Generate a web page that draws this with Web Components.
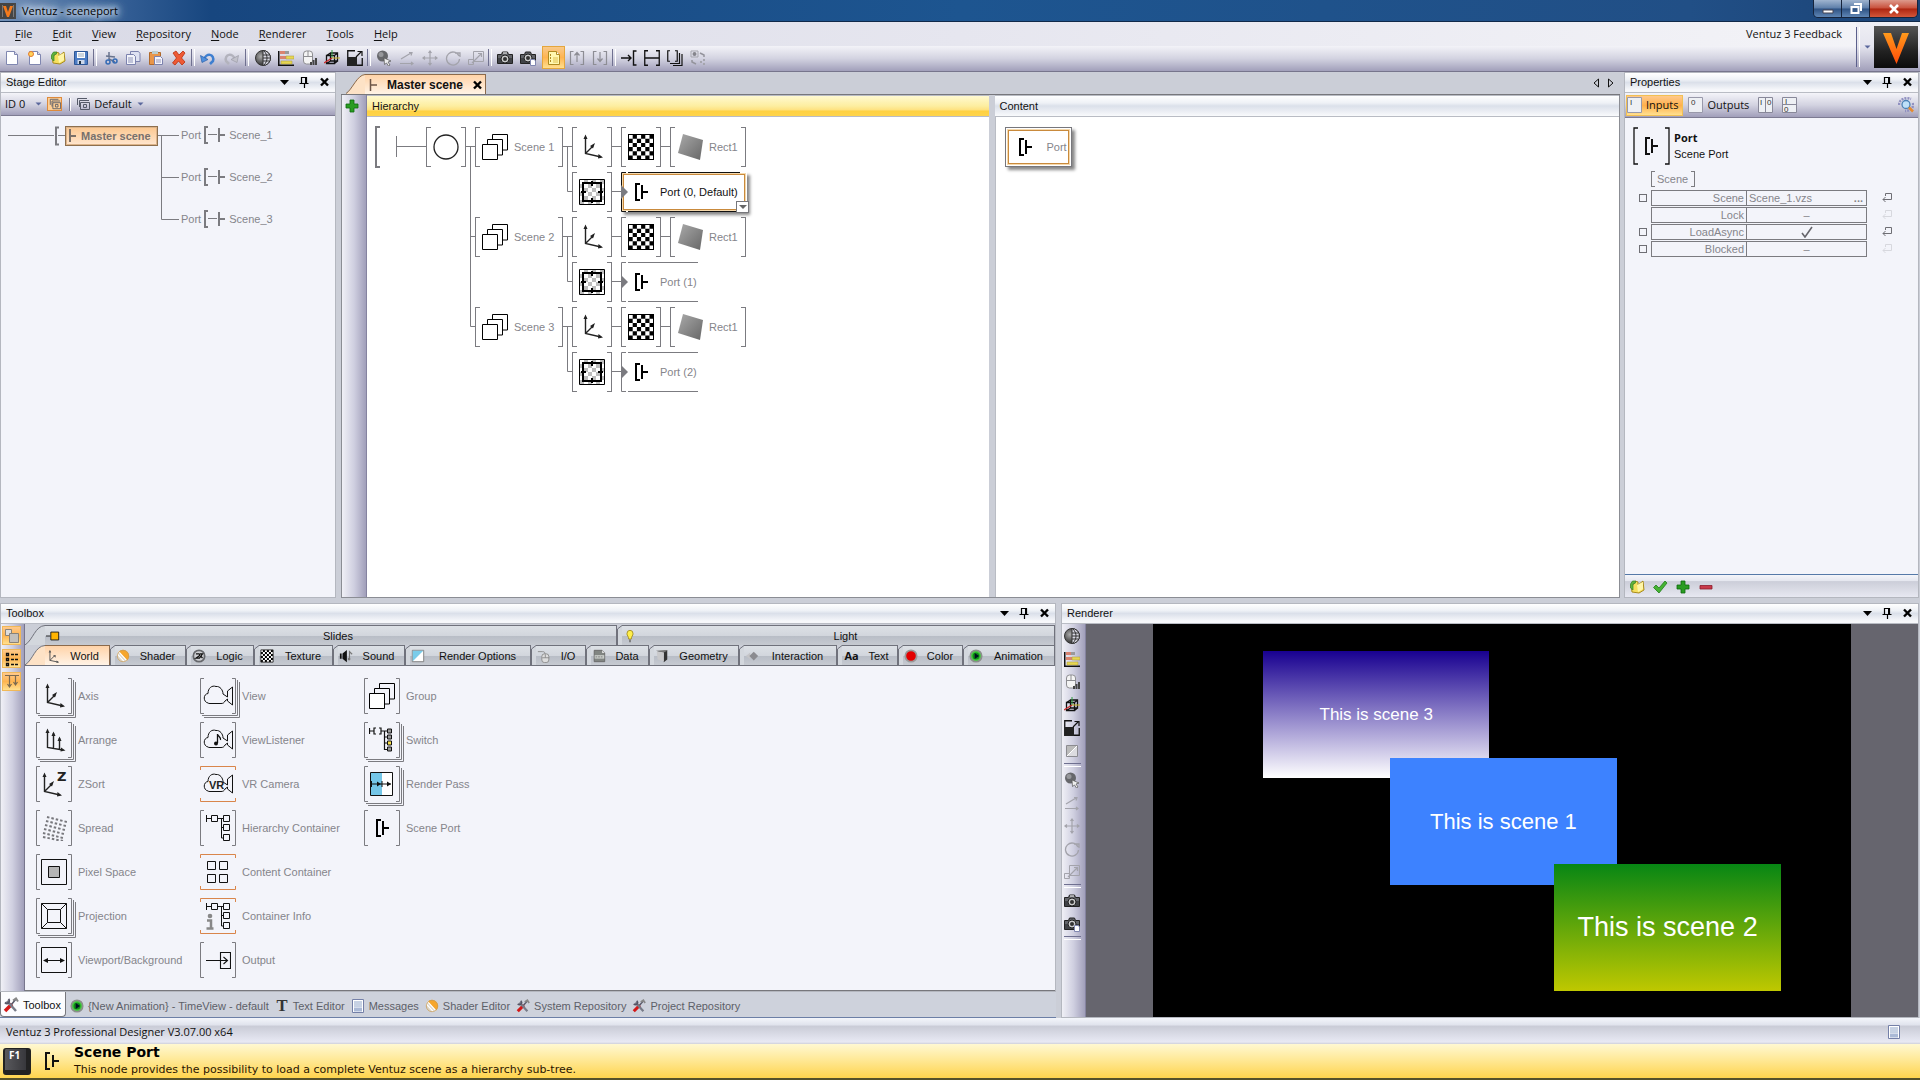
<!DOCTYPE html>
<html lang="en">
<head>
<meta charset="utf-8">
<title>Ventuz - sceneport</title>
<style>
html,body{margin:0;height:100%}
body{--ui:"Liberation Sans",Arial,sans-serif;--menu:"Open Sans","Noto Sans",sans-serif;--line:#7b7b80;--dim:#85858b;font:11px/14px var(--ui);color:#111;background:#c9cdd7;overflow:hidden}
</style>
</head>
<body>
<ventuz-app></ventuz-app>
<script>
const BASE = `:host,*{box-sizing:border-box}button{font:inherit;color:inherit;background:none;border:0;padding:0;margin:0;display:flex;align-items:center;justify-content:center}svg{display:block}`;
function define(name, css, html) {
  const t = document.createElement('template');
  t.innerHTML = `<style>${BASE}${css}</style>`;
  customElements.define(name, class extends HTMLElement {
    connectedCallback() {
      if (this.shadowRoot) return;
      const root = this.attachShadow({ mode: 'open' });
      root.append(t.content.cloneNode(true));
      const body = document.createElement('template');
      body.innerHTML = typeof html === 'function' ? html(this) : html;
      root.append(body.content.cloneNode(true));
    }
  });
}

/* ---------- icons: [viewBox size, markup] ---------- */
const checker = (n, s, o) => { let d = ''; for (let y = 0; y < n; y++) for (let x = 0; x < n; x++) if ((x + y) % 2) d += `M${o + x * s} ${o + y * s}h${s}v${s}h${-s}z`; return d; };
const page = '<path d="M2.500 1.500h8l3 3v10h-11z" fill="#fff" stroke="#8087b0"/><path d="M10.500 1.500v3h3" fill="#dde" stroke="#8087b0"/>';
const cloud = '<path d="M5 22C0 21 0 13 5 12.500C5 7 9 4 13 5.500C17 5 20 9 20 13L24.500 16V10L29.500 6V24L24.500 20V18L22 20C21 22 20 22.500 18 22.500H7C6 22.500 5.500 22.500 5 22Z" fill="none" stroke="#111"/>';
const treeBoxes = '<path d="M1.500 4v7M1.500 7.500h5M12.500 7.500h6M16.500 7.500v19.500h2M16.500 16.500h2" fill="none" stroke="#111"/><path d="M6.500 4.500h6v6h-6zM18.500 4.500h6v6h-6zM18.500 13.500h6v6h-6zM18.500 23.500h6v6h-6z" fill="none" stroke="#111"/>';
const tools = '<path d="M2 14L9 7" stroke="#d41818" stroke-width="3.500"/><path d="M8 8l5-6" stroke="#556" stroke-width="1.500"/><path d="M4 4l9 10" stroke="#777b88" stroke-width="2.500"/><path d="M2 5.500a3 3 0 0 0 4 0M5.500 2a3 3 0 0 1 .5 3.500" stroke="#556" stroke-width="2" fill="none"/><path d="M10 3.500l3-2 2 3" stroke="#888" stroke-width="2" fill="none"/>';
const ICONS = {
  ventuz: [16, '<rect width="16" height="16" fill="#444"/><path d="M2.500 2v12M13.500 2v12" stroke="#777"/><path d="M3 3h3l2 6 2-6h3L9 14H7z" fill="#f47a1c"/>'],
  newfile: [16, page],
  newstar: [16, page + '<circle cx="4" cy="4" r="2.500" fill="#ffd35a" stroke="#e77c2c"/>'],
  open: [16, '<path d="M2 6l3-1 1-3 3 1v3l5-4 1 9-5 3-7-1z" fill="#f6e05f" stroke="#a98b1d"/><path d="M1.500 9V5l2-3h3v2L4 5v6z" fill="#62b33b" stroke="#35842a" stroke-width=".7"/><path d="M8 6l6-3v7l-5 3z" fill="#fff6a8"/>'],
  save: [16, '<path d="M1.500 1.500h13v13h-13z" fill="#4c7cc4" stroke="#2d5797"/><path d="M4 2h8v6H4z" fill="#fff"/><path d="M4.500 10h7v4h-7z" fill="#cdd8ea"/><path d="M5 4h6M5 6h6" stroke="#9ab"/><path d="M6 11h2v3H6z" fill="#234"/>'],
  cut: [16, '<path d="M7 2v7l6 3M4 6l9 1" stroke="#68738d" stroke-width="1.500" fill="none"/><circle cx="6" cy="12" r="2" fill="none" stroke="#356bb5" stroke-width="1.500"/><circle cx="13" cy="11" r="2" fill="none" stroke="#356bb5" stroke-width="1.500"/>'],
  copy: [16, '<path d="M5.500 1.500h8l1.500 2v8h-9.500z" fill="#dfe2f2" stroke="#7c82ae"/><path d="M1.500 4.500h7l2 2v8h-9z" fill="#f2f3fa" stroke="#7c82ae"/><path d="M3 8h5M3 10h5M3 12h5" stroke="#8d93b8"/>'],
  paste: [16, '<path d="M1.500 2.500h11v12h-11z" fill="#e8964a" stroke="#b0692a"/><path d="M4 1h6v3H4z" fill="#bcc"/><path d="M6.500 6.500h6l2 2v6h-8z" fill="#f4f4fb" stroke="#7c82ae"/><path d="M8 10h5M8 12h5" stroke="#99b"/>'],
  del: [16, '<path d="M2 3l3-2 3 4 4-4 2 2-3.500 5 3.500 4-3 3-3.500-4-3.500 4-2.500-2 4-5z" fill="#ee5a35" stroke="#b9300f" stroke-width=".8"/>'],
  undo: [16, '<path d="M4 10c2-8 11-6 9 1l-3 3" fill="none" stroke="#3f7fd0" stroke-width="2.500"/><path d="M0.500 5.500l1.500 7 6-3z" fill="#4f90de" stroke="#2b5ea8" stroke-width=".7"/>'],
  redo: [16, '<path d="M12 10C10 2 1 4 3 11l3 3" fill="none" stroke="#b3b3bd" stroke-width="2.500"/><path d="M15.500 5.500l-1.500 7-6-3z" fill="#c2c2cb" stroke="#9b9ba6" stroke-width=".7"/>'],
  globe: [16, '<defs><radialGradient id="g" cx=".35" cy=".4"><stop offset="0" stop-color="#aaa"/><stop offset="1" stop-color="#444"/></radialGradient></defs><circle cx="8" cy="8" r="7.500" fill="url(#g)" stroke="#333"/><path d="M8 .5a7.500 7.500 0 0 1 0 15z" fill="#d8d8e2" stroke="#333"/><path d="M8 5h6.500M8 8h7.500M8 11h6.500M9 1c4 4 4 10 0 14" fill="none" stroke="#333"/>'],
  bars: [16, '<path d="M.75 1v14.250H16" fill="none" stroke="#111" stroke-width="1.500"/><path d="M2 1h5v3H2zM2 6h6v3H2z" fill="#d98370"/><path d="M7 1h4v3H7z" fill="#999"/><path d="M8 6h8v3H8zM3 11h11v3H3z" fill="#e6d653" stroke="#a89a3a" stroke-width=".5"/>'],
  mouse: [16, '<rect x="2.500" y="1" width="9" height="13" rx="3" fill="#f4f4f4" stroke="#8e8e92"/><path d="M7 1v5M2.500 6.500h9" stroke="#8e8e92"/><path d="M9 12h2v3H9zM11.500 10h2v5h-2zM14 8h2v7h-2z" fill="#444"/>'],
  cube: [16, '<path d="M2.500 5.500h8v8h-8zM6.500 3h7v8h-7zM2.500 5.500l4-2.500M10.500 5.500l3-2.500M10.500 13.500l3-2.500M2.500 13.500l4-2.500" fill="none" stroke="#111" stroke-width="1.300"/><path d="M8 0v8" stroke="#2a9a3a"/><path d="M8 8h8" stroke="#cbb62a"/><path d="M8 8l-8 5" stroke="#cc2a2a" stroke-width="1.300"/>'],
  scale: [16, '<path d="M.75 6V.75H8M15.250 8v7.250H10M.75 6v9.250h9" fill="none" stroke="#111" stroke-width="1.300"/><path d="M1 7h9v9H1z" fill="#222"/><path d="M9 7l5-5M10.500 1.500H15V6" fill="none" stroke="#111" stroke-width="1.200"/>'],
  half: [16, '<path d="M2.500 2.500h11v11h-11z" fill="#dcdce0" stroke="#8b8b90"/><path d="M3 3h10L3 13z" fill="#bbb"/><path d="M3 13L13 3" stroke="#fff"/>'],
  pick: [16, '<circle cx="6.500" cy="6" r="5.500" fill="#66676b"/><circle cx="5" cy="4.500" r="2.500" fill="#96979b"/><path d="M8 8l7 3-3 1 2 3-1.500 1-2-3-2 1.500z" fill="#eee" stroke="#555" stroke-width=".7"/>'],
  axes: [16, '<path d="M2 9l10-6M1 13.500h13M10 2.500h3l-1 3M12 12l2 1.500-2 1.500" fill="none" stroke="#a3a3ab" stroke-width="1.200"/>'],
  move: [16, '<path d="M8 1v14M1 8h14M6.500 3L8 1l1.500 2M6.500 13L8 15l1.500-2M3 6.500L1 8l2 1.500M13 6.500L15 8l-2 1.500" fill="none" stroke="#a3a3ab" stroke-width="1.200"/>'],
  rotate: [16, '<path d="M14 6A6.500 6.500 0 1 0 14.500 9M10 3h5v4" fill="none" stroke="#a3a3ab" stroke-width="1.300"/>'],
  resize: [16, '<path d="M5.500 1.500h10v10h-10zM.5 9.500h5v5h-5z" fill="none" stroke="#a3a3ab"/><path d="M4 13l9-9M10 3.500h3.500V7" fill="none" stroke="#a3a3ab" stroke-width="1.200"/>'],
  camera: [16, '<path d="M.5 4.500h4l1-2.500h5l1 2.500h4v9H.5z" fill="#63656a" stroke="#222"/><path d="M1 8h14v5H1z" fill="#404246"/><circle cx="8" cy="9" r="4" fill="#c9cacb" stroke="#222"/><circle cx="8" cy="9" r="2" fill="#333"/><path d="M6 3h4" stroke="#fff"/>'],
  camera2: [16, '<path d="M.5 4.500h4l1-2.500h5l1 2.500h4v9H.5z" fill="#63656a" stroke="#222"/><path d="M1 8h14v5H1z" fill="#404246"/><circle cx="8" cy="8" r="4" fill="#c9cacb" stroke="#222"/><circle cx="8" cy="8" r="2" fill="#333"/><path d="M10.500 9.500h4l1 1.500v4.500h-5z" fill="#fff" stroke="#8087b0"/>'],
  note: [16, '<path d="M2.500 1.500h8l3 3v10h-11z" fill="#fff7b0" stroke="#b08a20"/><path d="M10.500 1.500v3h3" fill="#fff" stroke="#b08a20"/><path d="M4 5h1M4 8h1M4 11h1" stroke="#b08a20" stroke-width="2"/><path d="M7 8h5M7 10h5M7 12h5" stroke="#e0c050"/>'],
  bup: [16, '<path d="M4.500 1.500h-3v13h3M11.500 1.500h3v13h-3M8 3v9M5.500 5.500L8 2.500l2.500 3" fill="none" stroke="#8d8d94" stroke-width="1.200"/>'],
  bdown: [16, '<path d="M4.500 1.500h-3v13h3M11.500 1.500h3v13h-3M8 2v9M5.500 8.500L8 11.500l2.500-3" fill="none" stroke="#8d8d94" stroke-width="1.200"/>'],
  inb: [16, '<path d="M15.500 1h-3v14h3M0 8h10M7 5l3 3-3 3" fill="none" stroke="#111" stroke-width="1.400"/>'],
  midb: [16, '<path d="M4 .75H.75v14.500H4M12 .75h3.250v14.500H12M1 8h14" fill="none" stroke="#111" stroke-width="1.300"/>'],
  stackb: [16, '<path d="M3 .75H.75v10.500H3M8 .75h2.250v10.500H8" fill="none" stroke="#111" stroke-width="1.200"/><path d="M3 13.500h9.500V3M6 15.500h9V4" fill="none" stroke="#111" stroke-width="1.200"/>'],
  swap: [16, '<path d="M1 1h7v6H1z" fill="none" stroke="#a5a5ad"/><circle cx="4.500" cy="4" r="2" fill="#85858c"/><path d="M10 3l4 2v2M6 14l-4-2v-2" fill="none" stroke="#94949c" stroke-width="1.500"/><path d="M10 11h2v2h-2zM13 9h2v2h-2zM13 13h2v2h-2z" fill="#a5a5ad"/>'],
  find: [16, '<path d="M1 8c0-6 7-8 12-6M15 6c1 5-3 8-8 8" fill="none" stroke="#9090c0" stroke-width="2.500" stroke-dasharray="2 1"/><circle cx="8" cy="7.500" r="4" fill="#bfe0f8" stroke="#4d82b5" stroke-width="1.300"/><path d="M11 10.500l4 4" stroke="#e58a2e" stroke-width="2.500"/>'],
  ok: [16, '<path d="M1.500 8.500L4 6l3 3 6-7 2 2-8 10z" fill="#46b333" stroke="#1f7d19" stroke-width=".8"/>'],
  plus: [16, '<path d="M6 2h4v4h4v4h-4v4H6v-4H2V6h4z" fill="#2a9c22" stroke="#0c6a0c" stroke-width=".8"/>'],
  minus: [16, '<path d="M2 6.500h12v3.500H2z" fill="#c8394a" stroke="#8c1c2c" stroke-width=".8"/>'],
  caret: [16, '<path d="M4 6h9l-4.500 5z" fill="#000"/>'],
  pin: [16, '<path d="M5.500 3.500h5v6h-5zM3.500 9.500h9M8.500 10v4" fill="none" stroke="#000" stroke-width="1.200"/><path d="M9 3h2v7H9z" fill="#000"/>'],
  close: [16, '<path d="M5 4.500l7 7M12 4.500l-7 7" stroke="#000" stroke-width="2.400"/>'],
  minicaret: [8, '<path d="M1.500 2.500h6l-3 3z" fill="#5a679c"/>'],
  stages: [14, '<path d="M1.500 8V1.500H11M3.500 10V3.500H13M4.500 5.500h9v7h-9z" fill="none" stroke="#555a68"/><path d="M7.500 7.500h3v3h-3z" fill="none" stroke="#555a68"/>'],
  msg: [14, '<path d="M1.500 .5h11v13h-11z" fill="#fff" stroke="#7480a8"/><path d="M3 3h8M3 5h8M3 7h8" stroke="#8ea4c8"/><path d="M3 8.500h8v4H3z" fill="#aab9d6"/>'],
  tools: [16, tools],
  anim: [16, '<circle cx="8" cy="8" r="6.500" fill="#3fd03a" stroke="#8b8f8b" stroke-width="2"/><circle cx="8" cy="8" r="4" fill="#118a18"/><path d="M6.500 4.500v7L11.500 8z" fill="#012"/>'],
  tee: [16, '<text x="8" y="14" text-anchor="middle" font-family="Liberation Serif,serif" font-weight="bold" font-size="19" fill="#333">T</text>'],
  shader: [16, '<circle cx="8" cy="8" r="7" fill="#dcd5c6"/><path d="M3 3a7 7 0 0 1 10 10z" fill="#f6a62c"/><path d="M1.500 5.500l8 9M3 3l9 10" stroke="#fff" stroke-width="1.500"/><circle cx="8" cy="8" r="6.500" fill="none" stroke="#c59a58" stroke-width=".8"/>'],
  logic: [16, '<circle cx="8" cy="8" r="6.500" fill="#cfd0d4" stroke="#66686c" stroke-width="2"/><path d="M4.500 5.500h3.500c1 0 1 2 0 2.500l-3.500 2.500h4l3.500-5h-3M10 8l2 2.500" fill="none" stroke="#111" stroke-width="1.400"/>'],
  check16: [16, '<path d="M1 1h14v14H1z" fill="#fff"/><path d="' + checker(6, 2.3, 1) + '" fill="#000"/><path d="M1 1h14v14H1z" fill="none" stroke="#222"/>'],
  sound: [16, '<path d="M1 5h2v6H1zM4 5l5-4v14l-5-4z" fill="#111"/><path d="M12 12V3l3 3" fill="none" stroke="#777" stroke-width="1.300"/><circle cx="11.500" cy="11.500" r="1.500" fill="#777"/>'],
  ropt: [16, '<path d="M1.500 1.500h13v13h-13z" fill="#fff" stroke="#777"/><path d="M2 2h12L2 14z" fill="#7accea"/>'],
  io: [16, '<path d="M1 3h5c3 0 3 1 3 3" fill="none" stroke="#888"/><rect x="5.500" y="5.500" width="8" height="10" rx="3" fill="#ddd" stroke="#888"/><path d="M9.500 6v4M6 10h8" stroke="#888"/>'],
  data: [16, '<path d="M2.500 1.500h9l3 3v10h-12z" fill="#818582" stroke="#666"/><path d="M11.500 1.500v3h3" fill="#ddd"/><path d="M3 7h11v4H3z" fill="#c8ccc8"/><path d="M4 9h9" stroke="#777" stroke-dasharray="2 1"/>'],
  geo: [16, '<path d="M2 3l10-1 2-1v11l-4 3V4z" fill="#333"/><path d="M2 3h8v11L3 12z" fill="#c9c9cb"/><path d="M1 2l11-1 2 1-4 2z" fill="#777"/>'],
  inter: [16, '<path d="M1 8l5-4v8z" fill="#c5c5c8"/><path d="M5 8l5-5 5 5-5 5z" fill="#8b8b90"/>'],
  red: [16, '<circle cx="8" cy="8" r="6.500" fill="#e30000" stroke="#9a9a9a" stroke-width="2"/>'],
  slide: [16, '<path d="M0 8h5" stroke="#111"/><path d="M5.500 3.500h9v9h-9z" fill="#ffb400" stroke="#111"/>'],
  bulb: [16, '<path d="M4.500 5.500a3.500 4 0 0 1 7 0c0 2-2 3-2 6h-3c0-3-2-4-2-6z" fill="#ffef4a" stroke="#a08a20"/><path d="M7 12h2v3H7z" fill="#777"/>'],
  world: [16, '<path d="M4.500 2v11L14 15M4.500 13l6-6" fill="none" stroke="#555" stroke-width="1.100"/><path d="M3 4l1.500-3L6 4zM8 7h3v3zM12 13l3 2-3 1z" fill="#555"/>'],
  tb1: [16, '<path d="M1.500 1.500h6v6h-6z" fill="#ddd" stroke="#8a8378"/><path d="M5.500 5.500h9v9h-9z" fill="#c3c0bc" stroke="#8a8378"/>'],
  tb2: [16, '<path d="M2.500 2.500h2v2h-2zM2.500 7.500h2v2h-2zM2.500 12.500h2v2h-2z" fill="none" stroke="#111" stroke-width="1.300"/><path d="M7 3.500h8M7 8.500h8M7 13.500h8" stroke="#111" stroke-width="1.500" stroke-dasharray="3 1"/>'],
  tb3: [16, '<path d="M1 1.500h14M5.500 2v11M11.500 2v8M3.500 10l2 3 2-3M9.500 8l2 3 2-3" fill="none" stroke="#7b6a50" stroke-width="1.200"/>'],
  circle: [26, '<circle cx="13" cy="13" r="12" fill="none" stroke="#222" stroke-width="1.300"/>'],
  group: [26, '<path d="M10.500 5V.5h15v15.500H21" fill="none" stroke="#000"/><path d="M5.500 10V5.500h15v15.500H16" fill="none" stroke="#000"/><path d="M.5 10.500h15v15h-15z" fill="#fff" stroke="#000"/>'],
  axis: [26, '<path d="M6.500 3v16.500L22 23M6.500 19.500L14 12" fill="none" stroke="#222" stroke-width="1.400"/><path d="M4.500 5l2-4.500L8.500 5zM11 12l5-3-2 5.500zM19.500 20l4.500 3.500-5 1z" fill="#222"/>'],
  arrange: [26, '<path d="M6.500 5v15.500L22 23M12.500 6v15M18.500 11v11" fill="none" stroke="#222" stroke-width="1.400"/><path d="M4.500 6l2-4.500L8.500 6zM10.500 9l2-4.500 2 4.500zM16.500 14l2-4.500 2 4.500zM20 20.500l4.500 3-5 1z" fill="#222"/>'],
  zsort: [26, '<path d="M3.500 5v15.500L19 24M3.500 20.500L11 13" fill="none" stroke="#222" stroke-width="1.400"/><path d="M1.500 6l2-4.500L5.500 6zM8 13l5-3-2 5.500zM16.500 21l4.500 3.500-5 1z" fill="#222"/><text x="16" y="10" font-family="DejaVu Sans,sans-serif" font-weight="bold" font-size="13" fill="#222">Z</text>'],
  spread: [26, '<path d="M6 2l20 5M5 6l20 5M4 10l20 5M3 14l20 5M2 18l20 5M2 22l20 4" fill="none" stroke="#77777c" stroke-width="2" stroke-dasharray="2.500 2"/>'],
  pixel: [26, '<path d="M.5 .5h25v25H.5z" fill="none" stroke="#111"/><path d="M7.500 7.500h11v11h-11z" fill="#b5b5b5" stroke="#111"/>'],
  projection: [26, '<path d="M.5 .5h25v25H.5zM6.500 6.500h13v13h-13zM.5 .5l6 6M25.500 .5l-6 6M.5 25.500l6-6M25.500 25.500l-6-6" fill="none" stroke="#111"/>'],
  viewport: [26, '<path d="M.5 .5h25v25H.5zM4 13.500h18" fill="none" stroke="#111"/><path d="M2 13.500l5-2.500v5zM24 13.500L19 11v5z" fill="#111"/>'],
  view: [30, cloud],
  listener: [30, cloud + '<path d="M14.500 18V9c0 2 4 3 3 6" fill="none" stroke="#111" stroke-width="1.300"/><circle cx="13" cy="18.500" r="2" fill="#111"/>'],
  vr: [30, cloud + '<text x="6" y="20" font-family="Liberation Sans,sans-serif" font-weight="bold" font-size="11" fill="#222">VR</text>'],
  hcont: [30, '<g transform="translate(2 -2)">' + treeBoxes + '</g>'],
  cinfo: [30, '<g transform="translate(2 -2)">' + treeBoxes + '</g><circle cx="7" cy="15" r="2.300" fill="#888"/><path d="M4 19.500h4v8M3.500 27.500h7" stroke="#888" stroke-width="2.500" fill="none"/>'],
  ccont: [26, '<path d="M2.500 2.500h8v8h-8zM14.500 2.500h8v8h-8zM2.500 15.500h8v8h-8zM14.500 15.500h8v8h-8z" fill="none" stroke="#111"/>'],
  output: [26, '<path d="M15.500 5.500h10v16h-10zM1 13.500h21M18.500 10l4 3.500-4 3.500" fill="none" stroke="#111" stroke-width="1.100"/>'],
  switch: [26, '<path d="M.5 1v6M.5 4h4M7 1H5v6h2M10 1h2v6h-2M12 4h6M15.500 4v18.500h3M15.500 10h3M15.500 16h3" fill="none" stroke="#111" stroke-width="1.200"/><path d="M18.500 2h4v4h-4zM18.500 8h4v4h-4zM18.500 20h4v4h-4z" fill="#999" stroke="#111"/><path d="M18.500 14h4v4h-4z" fill="#f7e04a" stroke="#111"/>'],
  rpass: [26, '<path d="M1.500 1.500h22v23h-22z" fill="#fff" stroke="#111"/><path d="M2 2h11v22H2z" fill="#74c6e8"/><path d="M2 13h20M2.500 10v6M13 10v6" stroke="#111"/><path d="M8 10.500l4 2.500-4 2.500zM18 10.500l4 2.500-4 2.500z" fill="#111"/>'],
  port: [26, '<path d="M12 5H8v16h4" fill="none" stroke="#000" stroke-width="2"/><path d="M14 6v14M14 13h6" fill="none" stroke="#000" stroke-width="2"/>'],
  checker: [26, '<path d="M0 0h26v26H0z" fill="#fff" stroke="#000" stroke-width="2"/><path d="' + checker(6, 4.2, .5) + '" fill="#000"/>'],
  rect: [26, '<defs><linearGradient id="r" x2="1" y2="1"><stop offset="0" stop-color="#aaa"/><stop offset="1" stop-color="#666"/></linearGradient></defs><path d="M6 0l20 6-3 20-22-7z" fill="url(#r)"/>'],
  target: [26, '<path d="M.5 .5h25v25H.5z" fill="#fff" stroke="#000"/><path d="' + checker(6, 4, 1) + '" fill="#bdbdbd"/><path d="M4 4h18v18H4z" fill="none" stroke="#000" stroke-width="2"/><path d="M13 2v5M13 19v5M2 13h5M19 13h5" stroke="#000" stroke-width="2"/>'],
  teeport: [12, '<path d="M1.500 0v12M2 6h6" fill="none" stroke="#6d5648" stroke-width="1.500"/>'],
  revert: [12, '<path d="M4.500 4V1.500h6v6H2M4.500 5L2 7.500 4.500 10" fill="none" stroke="#6e6e74"/>']
};
define('vz-icon', ':host{display:inline-flex;flex:none}', el => {
  const [box, art] = ICONS[el.getAttribute('name')];
  const s = el.getAttribute('size') || box;
  return `<svg width="${s}" height="${s}" viewBox="0 0 ${box} ${box}" aria-hidden="true">${art}</svg>`;
});

/* ---------- bars and panels ---------- */
define('vz-toolbar', `
:host{display:flex;flex:none}
.bar{display:flex;flex:1;align-items:center}
:host([vertical]) .bar{flex-direction:column}
button{width:23px;height:23px;flex:none}
:host([vertical]) button{width:20px}
button.on{background:linear-gradient(#f9c98a,#ffb450 50%,#ffdf8e);border:1px solid #e5a63c;margin-left:3px}
i{flex:none;width:6px;height:17px;display:flex;justify-content:center}
i.w{width:9px}
i::before{content:"";width:2px;border-left:1px solid #6f7090;border-right:1px solid #fff}
:host([vertical]) i{width:17px;height:6px;align-items:center}
:host([vertical]) i::before{width:17px;height:2px;border:0;border-top:1px solid #6f7090;border-bottom:1px solid #fff}`,
el => `<div class="bar" role="toolbar">${el.getAttribute('items').split(' ').map(n => n === '|' ? '<i></i>' : n === '||' ? '<i class="w"></i>' : n[0] === '*' ? `<button class="on" aria-label="${n.slice(1)}"><vz-icon name="${n.slice(1)}"></vz-icon></button>` : `<button aria-label="${n}"><vz-icon name="${n}"></vz-icon></button>`).join('')}</div>`);

define('vz-panel', `
:host{display:flex;flex-direction:column;min-width:0;min-height:0;border:1px solid #b4b7bf;background:#f3f4fa}
header{display:flex;align-items:center;height:20px;flex:none;padding:0 1px 1px 5px;background:linear-gradient(#fff,#eef1f6 35%,#dbe0ea 50%,#f7f8fb 90%);border-bottom:1px solid #b9bcc4}
h2{font:inherit;margin:0;flex:1}
header button{width:20px;height:18px}
.body{display:flex;flex-direction:column;flex:1;min-height:0}`,
el => `<header><h2>${el.getAttribute('label')}</h2><button aria-label="Menu"><vz-icon name="caret"></vz-icon></button><button aria-label="Pin"><vz-icon name="pin"></vz-icon></button><button aria-label="Close"><vz-icon name="close"></vz-icon></button></header><div class="body"><slot></slot></div>`);

define('title-bar', `
:host{display:flex;height:22px;align-items:center;background:linear-gradient(90deg,#7391b8,#3c659b 5%,#17467f 11%,#1d5590 50%,#214f86 88%,#1b4376);border-bottom:1px solid #10294a;font:11px/16px var(--menu)}
vz-icon{margin-right:6px}
h1{font:inherit;margin:0;flex:1;color:#000}
h1 span{text-shadow:0 0 5px #dfe9f5,0 0 7px #dfe9f5,0 0 9px #cfdcec,0 0 12px #cfdcec,0 0 14px #cfdcec}
div{display:flex;align-self:flex-start;height:18px;margin-right:2px;border:1px solid #16243c;border-top:0;border-radius:0 0 5px 5px;overflow:hidden}
button{width:28px;background:linear-gradient(#9fb4cf,#5d7ea9 48%,#2e5283 52%,#5f86b5);border-right:1px solid #16243c}
button.x{width:47px;background:linear-gradient(#dd9a8c,#c8503b 48%,#ad2510 52%,#d4573a);border:0}`,
`<vz-icon name="ventuz"></vz-icon><h1><span>Ventuz - sceneport</span></h1><div><button aria-label="Minimize"><svg width="12" height="12"><path d="M1 7h10v3H1z" fill="#fff" stroke="#445"/></svg></button><button aria-label="Restore"><svg width="12" height="12"><path d="M4 1h7v7M1.500 4h7v6h-7z" fill="none" stroke="#fff" stroke-width="2"/></svg></button><button class="x" aria-label="Close window"><svg width="12" height="12"><path d="M2 2l8 8M10 2l-8 8" stroke="#fff" stroke-width="2.600"/></svg></button></div>`);

define('menu-bar', `
:host{display:flex;height:50px;background:linear-gradient(90deg,#d9dae6,#e6e6ef 50%,#f4f4f8);border-bottom:1px solid #77758c;font:11px/16px var(--menu)}
.main{flex:1;display:flex;flex-direction:column}
nav{display:flex;height:24px;align-items:center;padding-left:5px}
nav button{height:20px;padding:0 10px}
nav .fb{margin-left:auto;padding-right:14px}
u{text-underline-offset:2px}
vz-toolbar{height:25px}
.main>vz-toolbar{background:linear-gradient(#f3f3f8,#d3d3e1 50%,#a19fba);padding-bottom:2px}
.grip{display:flex;width:64px;align-items:center;background:linear-gradient(#f0f0f5,#e4e4ee 50%,#a19fba)}
.grip::before{content:"";height:40px;width:2px;border-left:1px solid #5c608c;border-right:1px solid #fff}
.grip button{width:14px;height:40px}`,
`<div class="main"><nav>${['File', 'Edit', 'View', 'Repository', 'Node', 'Renderer', 'Tools', 'Help'].map(t => `<button><span><u>${t[0]}</u>${t.slice(1)}</span></button>`).join('')}<button class="fb">Ventuz 3 Feedback</button></nav>
<vz-toolbar items="newfile newstar open save | cut copy paste del | undo redo || globe bars mouse cube scale | pick axes move rotate resize | camera camera2 *note bup bdown | inb midb stackb swap"></vz-toolbar></div>
<div class="grip"><button aria-label="Options"><vz-icon name="minicaret"></vz-icon></button><svg width="44" height="42" viewBox="0 0 44 42"><defs><linearGradient id="k" x2="0" y2="1"><stop offset="0" stop-color="#555"/><stop offset=".6" stop-color="#222"/><stop offset="1" stop-color="#0c0c0c"/></linearGradient><linearGradient id="o" x2="0" y2="1"><stop offset="0" stop-color="#ff9a1c"/><stop offset="1" stop-color="#ff4a08"/></linearGradient></defs><path d="M0 0h44v42H0z" fill="url(#k)"/><path d="M9 7h8l5.500 16L28 7h7L22.500 38z" fill="url(#o)"/></svg></div>`);

/* ---------- stage editor ---------- */
define('stage-port', `
:host{display:flex;align-items:center;gap:3px;height:18px;margin-bottom:24px;color:var(--dim)}`,
`<span>Port</span><svg width="22" height="18" fill="none" stroke="#7b7b80"><path d="M4 1H1v16h3" stroke-width="2"/><path d="M4 8.500h9"/><path d="M15 2v14M15 9h6" stroke-width="2"/></svg><slot></slot>`);
define('stage-editor', `
:host{display:flex;flex-direction:column;min-height:0;flex:1}
.bar{display:flex;align-items:center;height:23px;flex:none;background:linear-gradient(#f4f4f9,#d3d3e1 50%,#a19fba);border-bottom:1px solid #7d7b92;padding-left:4px;font:11px/16px var(--menu)}
.bar button{gap:4px;height:20px}
.bar .on{height:14px;background:#ffcf94;border:1px solid #dd8a3c;width:15px;margin:0 7px 0 5px;overflow:hidden}
.bar .id{gap:9px}
.sep{width:2px;height:13px;border-left:1px solid #77798f;border-right:1px solid #fff;margin-right:5px}
.tree{display:flex;padding:10px 0 0 7px}
.root{display:flex;align-items:center;height:20px}
b{display:flex;align-items:center;gap:5px;border:1px solid #8d6f4e;outline:1px solid #dcb389;outline-offset:-2px;background:linear-gradient(#fbc78f,#ffe6cf);height:20px;width:93px;padding-left:2px;color:#77706c;white-space:nowrap}`,
`<div class="bar"><button class="id">ID 0 <vz-icon name="minicaret"></vz-icon></button><button class="on" aria-label="Stages"><vz-icon name="stages" size="12"></vz-icon></button><span class="sep"></span><button><vz-icon name="stages"></vz-icon>Default<vz-icon name="minicaret"></vz-icon></button></div>
<div class="tree"><div class="root"><svg width="57" height="20" fill="none" stroke="#7b7b80"><path d="M0 9.500h46M50 9.500h7"/><path d="M51 1.500h-3v17h3" stroke-width="2"/></svg><b><svg width="8" height="16" fill="none" stroke="#7b7068" stroke-width="2"><path d="M2 1v13M2 8h6"/></svg>Master scene</b></div>
<svg width="23" height="100" fill="none" stroke="#7b7b80"><path d="M0 9.500h21M3.500 9.500v84h17.500M3.500 51.500h17.500"/></svg>
<div><stage-port>Scene_1</stage-port><stage-port>Scene_2</stage-port><stage-port>Scene_3</stage-port></div></div>`);

/* ---------- scene graph ---------- */
define('graph-node', `
:host{display:flex;align-items:center;height:40px;color:var(--dim)}
.l,.r{align-self:stretch;width:5px;border:1px solid var(--line);flex:none}
.l{border-right:0}.r{border-left:0;margin-left:auto}
vz-icon{margin:0 2px}
span.t{margin-left:4px;white-space:nowrap}`,
el => `<span class="l"></span><vz-icon name="${el.getAttribute('icon')}"></vz-icon>${el.textContent ? '<span class="t"><slot></slot></span>' : ''}<span class="r"></span>`);
define('port-node', `
:host{display:flex;align-items:center;height:40px;color:var(--dim)}
.n{position:relative;display:flex;align-items:center;height:40px;width:76px;padding-left:7px}
.edge{position:absolute;left:0;top:0}
:host([selected]) .n{width:126px}
:host([selected]){color:#111}
:host([selected]) .n,:host([framed]) .n{background:#fff;box-shadow:inset 0 0 0 1px #fff,inset 0 0 0 2px #f6d9ac,inset 0 0 0 3px #c98a3c,3px 3px 3px #888}
:host([framed]) .n{width:67px;border:1px solid #77777c;padding-left:6px}
vz-icon{margin-right:6px}
:host([framed]) vz-icon{margin-right:9px}
.n>*{white-space:nowrap}
button{position:absolute;right:-2px;bottom:-1px;width:13px;height:12px;background:#fff;border:1px solid #77777c}`,
el => { const s = el.hasAttribute('selected'), c = s ? '#111' : '#7b7b80', w = s ? 119 : 77;
  return `<div class="n">${el.hasAttribute('framed') ? '' : `<svg class="edge" width="${w}" height="40" fill="none" stroke="${c}"><path d="M5 .5H.5v39H5M7 .5h${w - 7}M7 39.500h${w - 7}"/><path d="M0 13l7 7-7 7z" fill="#7b7b80" stroke="none"/></svg>`}<vz-icon name="port"></vz-icon><slot></slot>${s ? '<button aria-label="Expand"><svg width="8" height="5"><path d="M0 0h8L4 4z" fill="#666"/></svg></button>' : ''}</div>`; });
define('scene-graph', `
:host{display:block;position:relative;flex:1;background:#fff;overflow:hidden}
svg.w{position:absolute;left:0;top:0}
graph-node,port-node{position:absolute}`, () => {
  let d = 'M29.500 19v21M30 29.500h29M99 29.500h9M103.500 29.500v180h4.500M103.500 119.500h4.500', n = '';
  for (let r = 0; r < 3; r++) {
    const y = 29.5 + 90 * r, t = 10 + 90 * r;
    d += `M195 ${y}h10M200.500 ${y}v45h4.500M245 ${y}h9M294 ${y}h9M245 ${y + 45}h9`;
    n += `<graph-node icon="group" style="left:108px;top:${t}px;width:88px">Scene ${r + 1}</graph-node><graph-node icon="axis" style="left:205px;top:${t}px;width:40px"></graph-node><graph-node icon="checker" style="left:254px;top:${t}px;width:40px"></graph-node><graph-node icon="rect" style="left:303px;top:${t}px;width:76px">Rect1</graph-node><graph-node icon="target" style="left:205px;top:${t + 45}px;width:40px"></graph-node><port-node ${r ? '' : 'selected'} style="left:254px;top:${t + 45}px">${['Port (0, Default)', 'Port (1)', 'Port (2)'][r]}</port-node>`;
  }
  return `<svg class="w" width="400" height="300" fill="none" stroke="#7b7b80"><path d="${d}"/><path d="M13 10H9v40h4" stroke-width="2"/></svg><graph-node icon="circle" style="left:59px;top:10px;width:40px"></graph-node>${n}`;
});
define('scene-document', `
:host{display:flex;flex-direction:column;min-width:0;min-height:0}
.tabs{display:flex;height:23px;flex:none;align-items:flex-end;padding:0 5px;border-bottom:1px solid #77777c;background:#cbced7}
.tab{display:flex;align-items:center;height:20px;font:bold 12px/16px var(--ui)}
.tab .t{display:flex;align-items:center;gap:6px;height:20px;background:linear-gradient(#ffd3a8,#fff3e6);border:1px solid #8b6a4c;border-width:1px 1px 0 0;padding:0 0 0 4px;width:121px;white-space:nowrap}
.t button{margin-left:auto}
.nav{margin-left:auto;display:flex;align-self:center;gap:7px;padding-right:1px}
.row{display:flex;flex:1;min-height:0;border:1px solid #8b8d94;border-top:0}
.strip{width:25px;flex:none;background:linear-gradient(90deg,#f0f0f6,#cfcfe0 50%,#a19fba);border-right:1px solid #8583a0;padding-top:3px}
.strip button{width:20px}
section{display:flex;flex-direction:column;min-width:0}
.a{flex:621;margin-right:6px}.b{flex:624}
h3{font:inherit;margin:0;height:22px;line-height:20px;padding:0 5px;border:solid #b9bcc4;border-width:1px 0;background:linear-gradient(#fff,#eef1f6 35%,#dbe0ea 50%,#f9fafc)}
.a h3{background:linear-gradient(#fff9d0,#fdeea0 50%,#fee07c 72%,#ffd140 73%,#ffd44c)}
.c{flex:1;background:#fff;border-left:1px solid #b9bcc4;padding:10px 9px}`,
`<div class="tabs"><div class="tab"><svg width="19" height="20"><path d="M0 20C8 14 10 1 19 .5V20z" fill="#fde2c6"/><path d="M0 19.500C6 16 11 1 19 .5" fill="none" stroke="#8b6a4c"/></svg><div class="t"><vz-icon name="teeport"></vz-icon>Master scene<button aria-label="Close tab"><vz-icon name="close"></vz-icon></button></div></div><div class="nav"><button aria-label="Previous"><svg width="7" height="10"><path d="M5.500 1v8L1 5z" fill="none" stroke="#111"/></svg></button><button aria-label="Next"><svg width="7" height="10"><path d="M1.500 1v8L6 5z" fill="none" stroke="#111"/></svg></button></div></div>
<div class="row"><div class="strip"><button aria-label="Add"><vz-icon name="plus"></vz-icon></button></div><section class="a"><h3>Hierarchy</h3><scene-graph></scene-graph></section><section class="b"><h3>Content</h3><div class="c"><port-node framed>Port</port-node></div></section></div>`);

/* ---------- properties ---------- */
define('property-editor', `
:host{display:flex;flex-direction:column;flex:1;min-height:0}
.bar{display:flex;align-items:center;height:25px;flex:none;background:linear-gradient(#f4f4f9,#d3d3e1 50%,#a19fba);border-bottom:1px solid #7d7b92;font:11px/16px var(--menu);padding:0 4px 0 1px;gap:4px}
.bar button{gap:4px;height:21px;padding:0 4px 0 1px}
.bar .on{background:linear-gradient(#ffc98c,#ffb04c 50%,#ffe090);border:1px solid #f2c054;padding-left:0}
.bar .end{margin-left:auto;padding:0}
.bar text{font:8px "Liberation Sans",sans-serif;fill:#333}
.body{flex:1;padding:9px 0 0 8px}
.head{display:flex;align-items:center;gap:4px;height:38px}
.head p{margin:0;line-height:16px}.head b{font:bold 11px/16px var(--menu)}
.grp{display:flex;align-items:center;height:16px;margin:6px 0 2px 18px;color:var(--dim)}
.grp i{width:4px;height:16px;border:1px solid var(--line);border-right:0}.grp i+span{margin:0 3px 0 2px}.grp i:last-child{border:1px solid var(--line);border-left:0}
table{border-collapse:separate;border-spacing:0 1px;color:var(--dim);table-layout:fixed;margin-top:1px}
td,th{height:16px;padding:0 2px;font-weight:normal;line-height:13px}
th,.v{border:1px solid var(--line)}th{text-align:right;border-right:0;width:95px}
.v{width:121px}.c{text-align:center}
.f{display:flex;justify-content:space-between;padding-right:1px}
.k{width:18px;padding:0 0 0 6px}.u{padding-left:13px}.u button{width:14px}.off{opacity:.2}
input{appearance:none;display:block;width:8px;height:8px;border:1px solid #6e6e74;margin:0}
td svg{margin:auto}
footer{height:23px;flex:none;border-top:1px solid #5579a8;background:linear-gradient(#f4f5fa,#e6e8f0 25%,#ccced9 30%,#e7e8f1)}`,
`<div class="bar"><button class="on"><svg width="15" height="16"><path d="M.5 .5h14v15H.5z" fill="#eef0f4" stroke="#99a"/><text x="3" y="8">I</text></svg>Inputs</button><button><svg width="15" height="16"><path d="M.5 .5h14v15H.5z" fill="#eef0f4" stroke="#99a"/><text x="3" y="8">0</text></svg>Outputs</button><button aria-label="Side by side"><svg width="15" height="16"><path d="M.5 .5h14v15H.5zM7.500 0v16" fill="#eef0f4" stroke="#889"/><text x="2" y="8">I</text><text x="9" y="8">0</text></svg></button><button aria-label="Stacked"><svg width="15" height="16"><path d="M.5 .5h14v15H.5zM0 7.500h15" fill="#eef0f4" stroke="#889"/><text x="3" y="7">I</text><text x="2" y="15">0</text></svg></button><button class="end" aria-label="Find"><vz-icon name="find"></vz-icon></button></div>
<div class="body"><div class="head"><svg width="37" height="38" fill="none" stroke="#111"><path d="M5 1H1v36h4M32 1h4v36h-4" stroke-width="1.300"/><path d="M17 11h-4v16h4M19 12v14M19 19h6" stroke-width="2"/></svg><p><b>Port</b><br>Scene Port</p></div>
<div class="grp"><i></i><span>Scene</span><i></i></div>
<table>${[['Scene', 1, 'Scene_1.vzs', 1], ['Lock', 0, '–', 0], ['LoadAsync', 1, '✓', 1], ['Blocked', 1, '–', 0]].map(([n, k, v, u]) => `<tr><td class="k">${k ? `<input type="checkbox" aria-label="Bind ${n}">` : ''}</td><th scope="row">${n}</th><td class="v ${v.length > 1 ? '' : 'c'}">${v.length > 1 ? `<div class="f"><span>${v}</span><button aria-label="Browse"><b>...</b></button></div>` : v === '✓' ? '<svg width="12" height="12" role="img" aria-label="on"><path d="M1 7l3 4L11 1" fill="none" stroke="#66666c" stroke-width="1.600"/></svg>' : v}</td><td class="u"><button class="${u ? '' : 'off'}" aria-label="Revert ${n}"><vz-icon name="revert" size="12"></vz-icon></button></td></tr>`).join('')}</table></div>
<footer><vz-toolbar items="open ok plus minus"></vz-toolbar></footer>`);

/* ---------- toolbox ---------- */
define('bevel-tab', `
:host{display:flex;height:20px;min-width:0}
button{display:flex;flex:1;min-width:0;height:20px}
.s{flex:none}
.b{display:flex;flex:1;min-width:0;align-items:center;height:20px;border:1px solid #70727c;border-width:1px 1px 0 0;background:linear-gradient(#dde1e6,#d2d6dd 50%,#b8bdc6 52%,#c6cad1);padding-left:1px}
.b span{flex:1;text-align:center;white-space:nowrap}
.g{fill:#d3d7dd}
:host([active]) .b{background:linear-gradient(#ffd3a8,#fff3e6);border-color:#8b6a4c}
:host([active]) .g{fill:#fde2c6}
.aa{font:bold 11px/14px var(--menu);width:17px}`,
el => { const w = +el.getAttribute('slant') || 5, i = el.getAttribute('icon');
  return `<button role="tab"><svg class="s" width="${w}" height="20"><path class="g" d="M0 20${w > 5 ? `C${w * .4} 15 ${w * .5} 1 ${w} .5` : 'V5L5 .5'}V20z"/><path d="${w > 5 ? `M0 20C${w * .4} 15 ${w * .5} 1 ${w} .5` : 'M.5 20V4L5 .5'}" fill="none" stroke="#70727c"/></svg><span class="b">${i === 'aa' ? '<b class="aa">Aa</b>' : `<vz-icon name="${i}" size="14"></vz-icon>`}<span><slot></slot></span></span></button>`; });
define('tool-item', `
:host{display:flex;align-items:center;gap:6px;height:36px;color:var(--dim)}
.box{position:relative;display:flex;align-items:center;justify-content:center;width:36px;height:36px;flex:none}
.e{position:absolute;left:0;top:0}`,
el => { const k = el.getAttribute('kind'); return `<div class="box"><svg class="e" width="41" height="41" fill="none" stroke="#7b7b80">${k === 'orange' ? '<path d="M.5 4V.5h35V4M.5 32v3.500h35V32" stroke="#d9854a"/>' : '<path d="M4 .5H.5v35H4M32 .5h3.500v35H32"/>'}${k === 'stack' ? '<path d="M37.500 2v35.500H2M39.500 4v35.500H4"/>' : ''}</svg><vz-icon name="${el.getAttribute('icon')}"></vz-icon></div><slot></slot>`; });
define('tool-box', `
:host{display:flex;flex:1;min-height:0}
.strip{width:24px;flex:none;background:linear-gradient(90deg,#f0f0f6,#cfcfe0 50%,#a19fba);border-right:1px solid #77758c;display:flex;flex-direction:column;gap:4px;padding:2px 0 0 1px}
.strip button{width:19px;height:19px;background:linear-gradient(#ffc98c,#ffb450 50%,#ffe090);border:1px solid #f0b858}
.m{flex:1;display:flex;flex-direction:column;min-width:0;background:#cbced7;padding-top:1px}
.r1,.r2{display:grid}
.r1{grid-template-columns:592fr 438fr}
.r2{grid-template-columns:85fr 76fr 68fr 79fr 72fr 126fr 55fr 63fr 90fr 98fr 61fr 65fr 92fr;border-bottom:1px solid #70727c}
.g{flex:1;background:#f3f4fa;display:grid;grid-template-rows:repeat(7,44px);grid-auto-flow:column;grid-auto-columns:164px;padding:12px 0 0 11px;border-bottom:1px solid #77777c;align-content:start}`,
() => { const T = [['Axis', 'axis', 'stack'], ['Arrange', 'arrange', 'stack'], ['ZSort', 'zsort'], ['Spread', 'spread'], ['Pixel Space', 'pixel'], ['Projection', 'projection', 'stack'], ['Viewport/Background', 'viewport'], ['View', 'view', 'stack'], ['ViewListener', 'listener'], ['VR Camera', 'vr', 'orange'], ['Hierarchy Container', 'hcont'], ['Content Container', 'ccont', 'orange'], ['Container Info', 'cinfo', 'orange'], ['Output', 'output'], ['Group', 'group'], ['Switch', 'switch', 'stack'], ['Render Pass', 'rpass', 'stack'], ['Scene Port', 'port']];
  const tabs = [['Shader', 'shader'], ['Logic', 'logic'], ['Texture', 'check16'], ['Sound', 'sound'], ['Render Options', 'ropt'], ['I/O', 'io'], ['Data', 'data'], ['Geometry', 'geo'], ['Interaction', 'inter'], ['Text', 'aa'], ['Color', 'red'], ['Animation', 'anim']];
  return `<div class="strip"><button aria-label="Groups"><vz-icon name="tb1"></vz-icon></button><button aria-label="List"><vz-icon name="tb2"></vz-icon></button><button aria-label="Sort"><vz-icon name="tb3"></vz-icon></button></div><div class="m"><div class="r1"><bevel-tab slant="20" icon="slide">Slides</bevel-tab><bevel-tab icon="bulb">Light</bevel-tab></div><div class="r2"><bevel-tab active slant="20" icon="world">World</bevel-tab>${tabs.map(t => `<bevel-tab icon="${t[1]}">${t[0]}</bevel-tab>`).join('')}</div><div class="g">${T.map(t => `<tool-item icon="${t[1]}" kind="${t[2] || ''}">${t[0]}</tool-item>`).join('')}</div></div>`; });
define('dock-tabs', `
:host{display:flex;height:26px;flex:none;align-items:flex-start;background:#ced2dc;border-bottom:1px solid #6c7fa6;color:#5d6068}
button{gap:4px;height:25px;padding:2px 3px 0;white-space:nowrap}
.on{background:#fcfcfe;color:#111;border:1px solid #77777c;border-top:0;border-radius:0 0 4px 4px;padding:2px 4px 0 2px;margin-right:1px}`,
`<button class="on"><vz-icon name="tools"></vz-icon>Toolbox</button>${[['anim', '{New Animation} - TimeView - default'], ['tee', 'Text Editor'], ['msg', 'Messages'], ['shader', 'Shader Editor'], ['tools', 'System Repository'], ['tools', 'Project Repository']].map(t => `<button><vz-icon name="${t[0]}" size="14"></vz-icon>${t[1]}</button>`).join('')}`);

/* ---------- renderer ---------- */
define('render-view', `
:host{display:flex;flex:1;min-height:0}
vz-toolbar{width:24px;padding-right:3px;background:linear-gradient(90deg,#f0f0f6,#cfcfe0 50%,#a19fba);border-right:1px solid #8583a0}
.vp{flex:1;display:flex;justify-content:center;background:#66656e}
.out{position:relative;background:#000;width:84%}
.s{position:absolute;width:32.400%;height:32.400%;display:flex;align-items:center;justify-content:center;color:#fff;white-space:nowrap}
.s3{left:15.800%;top:6.900%;background:linear-gradient(#180090,#fff);font-size:17px}
.s1{left:34%;top:34.100%;background:#3d82ff;font-size:22px}
.s2{left:57.500%;top:61%;background:linear-gradient(#078614,#bfc800);font-size:27px}`,
`<vz-toolbar vertical items="globe bars mouse cube scale half | pick axes move rotate resize | camera camera2 |"></vz-toolbar><div class="vp"><div class="out"><div class="s s3">This is scene 3</div><div class="s s1">This is scene 1</div><div class="s s2">This is scene 2</div></div></div>`);

/* ---------- footer bars ---------- */
define('status-bar', `
:host{display:flex;align-items:center;justify-content:space-between;height:26px;padding:2px 19px 0 6px;font:11px/16px var(--menu);background:linear-gradient(#f4f6fb,#dfe2ec 28%,#c9cbd6 30%,#e8e9f4 92%,#cfd0da)}`,
`<span>Ventuz 3 Professional Designer V3.07.00 x64</span><vz-icon name="msg"></vz-icon>`);
define('help-bar', `
:host{display:flex;align-items:center;height:36px;background:linear-gradient(#fff8d2,#ffe998 45%,#ffd44e);border-bottom:2px solid #55512a;font:11px/16px "DejaVu Sans",sans-serif;color:#2a1500}
p{margin:0 0 0 14px}b{font-size:14px;color:#000}
.key{display:flex;align-items:flex-start;margin:0 10px 0 3px;width:28px;height:27px;border-radius:3px;background:linear-gradient(90deg,#58585c,#38383c);border:1px solid #222;border-width:1px 5px 5px 2px;color:#fff;font:bold 10px/13px var(--menu);padding:0 4px}`,
`<span class="key">F1</span><svg width="19" height="20" fill="none" stroke="#111" stroke-width="2"><path d="M9 2H5v16h4M12 4v12M12 10h6"/></svg><p><b>Scene Port</b><br>This node provides the possibility to load a complete Ventuz scene as a hierarchy sub-tree.</p>`);

define('ventuz-app', `
:host{display:flex;flex-direction:column;height:100vh}
main{flex:1;min-height:0;display:flex;flex-direction:column;background:#cbced7}
.top{flex:526 1 0;min-height:0;display:grid;grid-template-columns:336px 1fr 295px;gap:5px;padding-right:1px}
.top scene-document{margin-right:-1px}
.bot{flex:415 1 0;min-height:0;display:grid;grid-template-columns:1056fr 858fr;gap:5px;padding-right:1px;margin-top:5px}
.left{display:flex;flex-direction:column;min-height:0;min-width:0}
.left vz-panel{flex:1}`,
`<title-bar></title-bar><menu-bar></menu-bar><main><div class="top"><vz-panel label="Stage Editor"><stage-editor></stage-editor></vz-panel><scene-document></scene-document><vz-panel label="Properties"><property-editor></property-editor></vz-panel></div>
<div class="bot"><div class="left"><vz-panel label="Toolbox"><tool-box></tool-box></vz-panel><dock-tabs></dock-tabs></div><vz-panel label="Renderer"><render-view></render-view></vz-panel></div></main><status-bar></status-bar><help-bar></help-bar>`);
</script>
</body>
</html>
